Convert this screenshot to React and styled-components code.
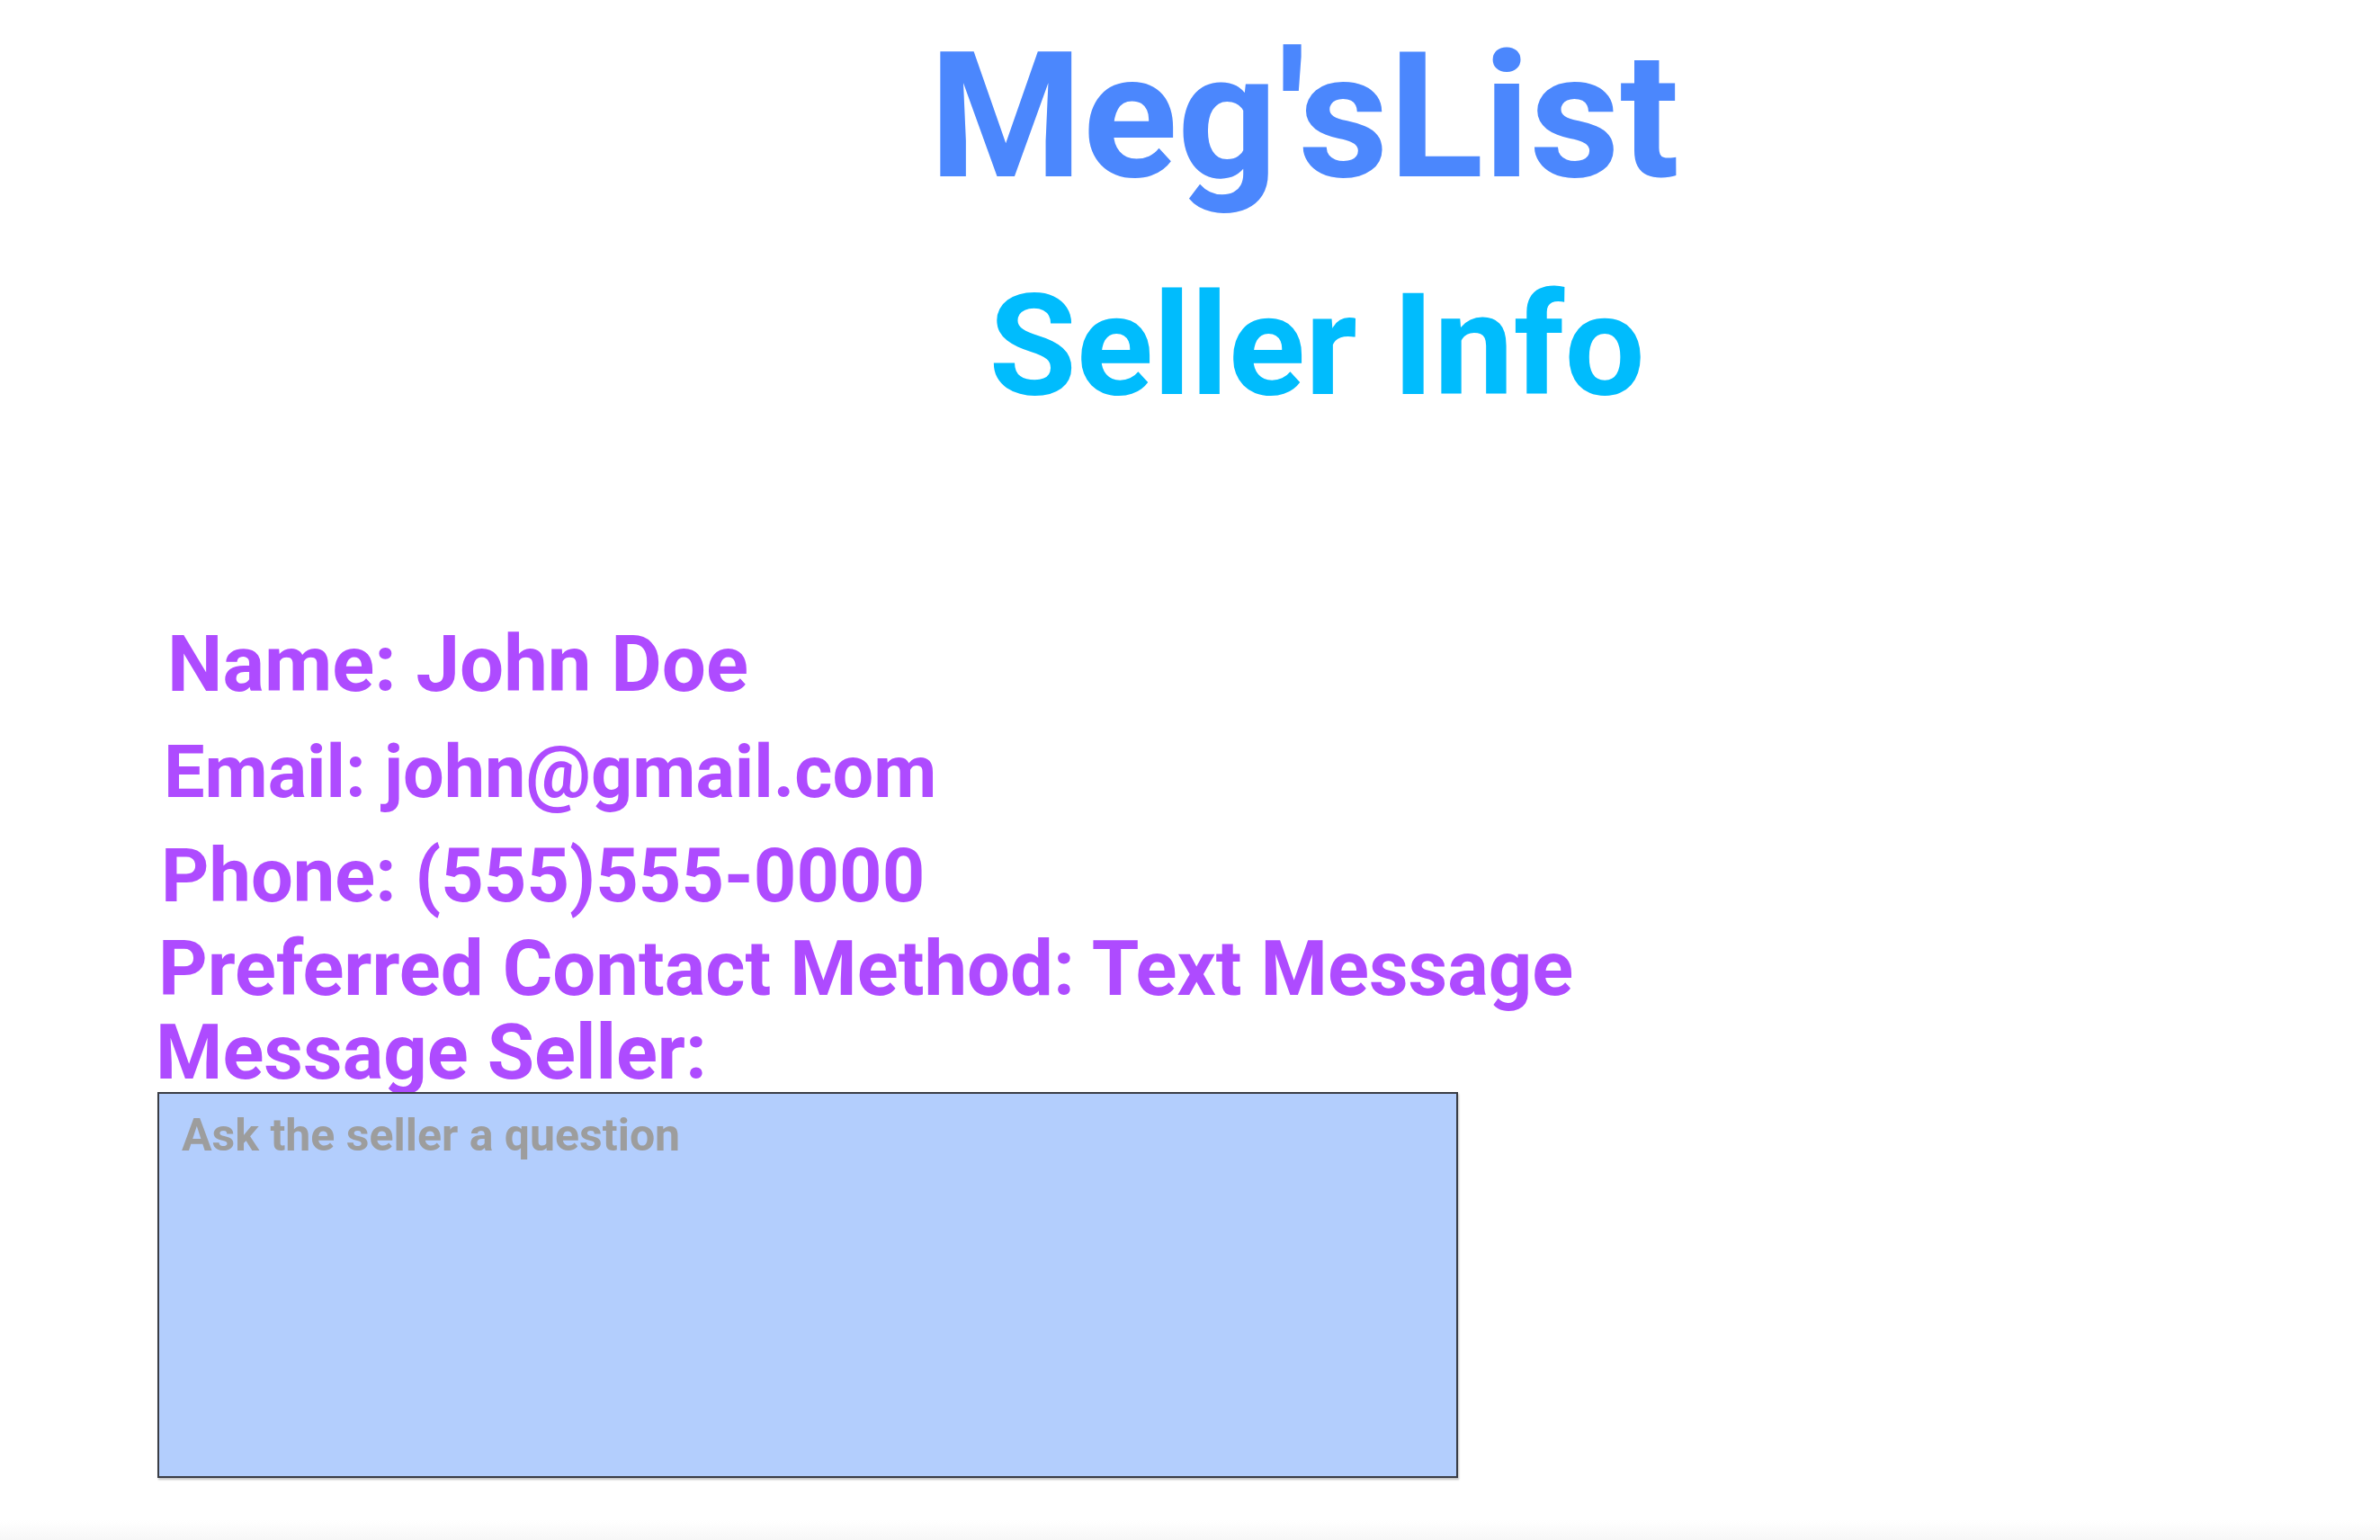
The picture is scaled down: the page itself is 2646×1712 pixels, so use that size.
import React from "react"
import styled, { createGlobalStyle } from "styled-components"

const GlobalStyle = createGlobalStyle`
  html, body {
    margin: 0;
    padding: 0;
    background: #ffffff;
  }
  body {
    font-family: Roboto, "Liberation Sans", Arial, sans-serif;
  }
`

const Page = styled.div`
  min-height: 100vh;
  display: flex;
  flex-direction: column;
  box-sizing: border-box;
`

const Header = styled.header`
  display: flex;
  flex-direction: column;
  align-items: center;
  padding-left: 254px;
  padding-top: 32px;
`

const Title = styled.h1`
  margin: 0;
  font-size: 195px;
  line-height: 1;
  font-weight: 700;
  color: #4b87fd;
`

const SubTitle = styled.h2`
  margin: 78px 0 0 28px;
  font-size: 158px;
  line-height: 1;
  font-weight: 700;
  color: #00bcfd;
`

const Info = styled.section`
  display: flex;
  flex-direction: column;
  align-items: flex-start;
  padding-top: 232px;
`

const Line = styled.p`
  margin: ${p => p.top || 0}px 0 0 ${p => p.left}px;
  font-size: ${p => p.size}px;
  line-height: 1;
  font-weight: 700;
  color: #ae4bff;
  white-space: nowrap;
`

const MessageBox = styled.textarea`
  display: block;
  margin: 1px 0 0 175px;
  width: 1446px;
  height: 429px;
  box-sizing: border-box;
  border: 2px solid #3a3d45;
  box-shadow: 1px 2px 2px rgba(0, 0, 0, 0.25);
  background: #b3cefd;
  padding: 17px 25px;
  font-family: Roboto, "Liberation Sans", Arial, sans-serif;
  font-size: 50px;
  font-weight: 700;
  color: #333;
  resize: none;
  outline: none;
  &::placeholder {
    color: #9d9d9d;
  }
`

const Footer = styled.div`
  margin-top: auto;
  height: 22px;
  background: linear-gradient(#ffffff, #f7f7f7);
`

export default function App() {
  return (
    <Page>
      <GlobalStyle />
      <Header>
        <Title>Meg'sList</Title>
        <SubTitle>Seller Info</SubTitle>
      </Header>
      <Info>
        <Line left={186} size={87}>Name: John Doe</Line>
        <Line left={182} top={36} size={81}>Email: john@gmail.com</Line>
        <Line left={179} top={33} size={83}>Phone: (555)555-0000</Line>
        <Line left={176} top={20} size={85}>Preferred Contact Method: Text Message</Line>
        <Line left={173} top={8} size={85}>Message Seller:</Line>
        <MessageBox placeholder="Ask the seller a question" />
      </Info>
      <Footer />
    </Page>
  )
}
